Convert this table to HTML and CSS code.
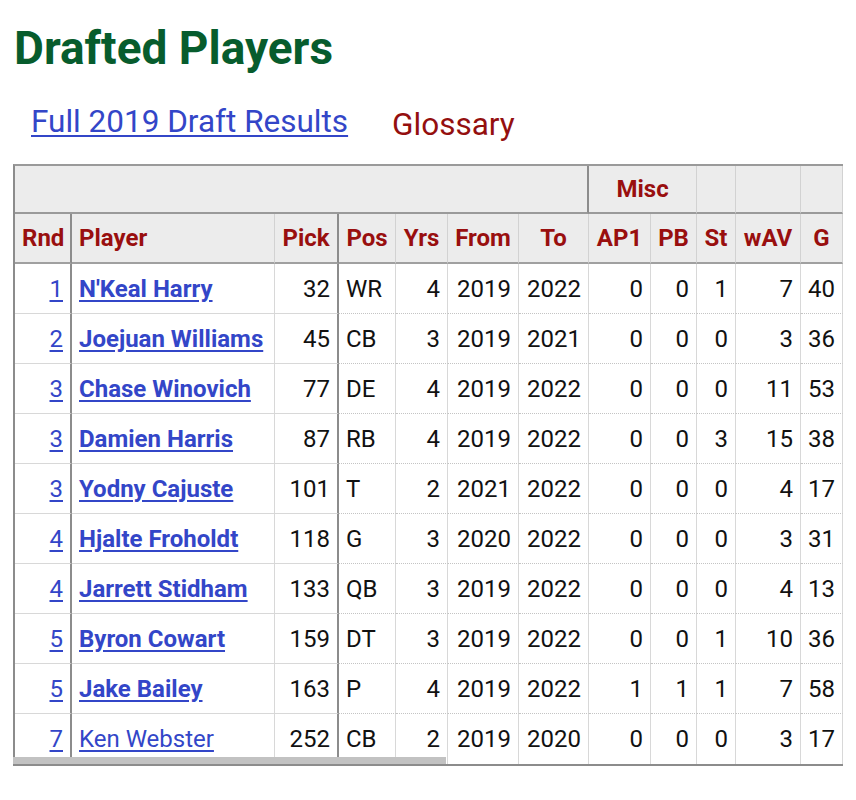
FILE: index.html
```html
<!DOCTYPE html>
<html>
<head>
<meta charset="utf-8">
<link rel="stylesheet" href="styles.css">
</head>
<body>
<h1 class="title">Drafted Players</h1>
<div class="links">
  <a class="full" href="#">Full 2019 Draft Results</a>
  <span class="gloss">Glossary</span>
</div>
<div class="table-wrap">
  <table class="stats">
    <colgroup>
      <col class="c-rnd"><col class="c-player"><col class="c-pick"><col class="c-pos"><col class="c-yrs"><col class="c-from"><col class="c-to"><col class="c-ap1"><col class="c-pb"><col class="c-st"><col class="c-wav"><col class="c-g">
    </colgroup>
    <thead>
      <tr class="over">
        <th colspan="7" class="grp"></th>
        <th colspan="2" class="grp-start">Misc</th>
        <th></th><th></th><th></th>
      </tr>
      <tr class="cols">
        <th>Rnd</th><th class="left">Player</th><th>Pick</th><th>Pos</th><th>Yrs</th><th>From</th><th>To</th><th>AP1</th><th>PB</th><th>St</th><th>wAV</th><th>G</th>
      </tr>
    </thead>
    <tbody>
      <tr><td><a href="#">1</a></td><td class="left"><a class="pl" href="#">N'Keal Harry</a></td><td>32</td><td class="left">WR</td><td>4</td><td>2019</td><td>2022</td><td>0</td><td>0</td><td>1</td><td>7</td><td>40</td></tr>
      <tr><td><a href="#">2</a></td><td class="left"><a class="pl" href="#">Joejuan Williams</a></td><td>45</td><td class="left">CB</td><td>3</td><td>2019</td><td>2021</td><td>0</td><td>0</td><td>0</td><td>3</td><td>36</td></tr>
      <tr><td><a href="#">3</a></td><td class="left"><a class="pl" href="#">Chase Winovich</a></td><td>77</td><td class="left">DE</td><td>4</td><td>2019</td><td>2022</td><td>0</td><td>0</td><td>0</td><td>11</td><td>53</td></tr>
      <tr><td><a href="#">3</a></td><td class="left"><a class="pl" href="#">Damien Harris</a></td><td>87</td><td class="left">RB</td><td>4</td><td>2019</td><td>2022</td><td>0</td><td>0</td><td>3</td><td>15</td><td>38</td></tr>
      <tr><td><a href="#">3</a></td><td class="left"><a class="pl" href="#">Yodny Cajuste</a></td><td>101</td><td class="left">T</td><td>2</td><td>2021</td><td>2022</td><td>0</td><td>0</td><td>0</td><td>4</td><td>17</td></tr>
      <tr><td><a href="#">4</a></td><td class="left"><a class="pl" href="#">Hjalte Froholdt</a></td><td>118</td><td class="left">G</td><td>3</td><td>2020</td><td>2022</td><td>0</td><td>0</td><td>0</td><td>3</td><td>31</td></tr>
      <tr><td><a href="#">4</a></td><td class="left"><a class="pl" href="#">Jarrett Stidham</a></td><td>133</td><td class="left">QB</td><td>3</td><td>2019</td><td>2022</td><td>0</td><td>0</td><td>0</td><td>4</td><td>13</td></tr>
      <tr><td><a href="#">5</a></td><td class="left"><a class="pl" href="#">Byron Cowart</a></td><td>159</td><td class="left">DT</td><td>3</td><td>2019</td><td>2022</td><td>0</td><td>0</td><td>1</td><td>10</td><td>36</td></tr>
      <tr><td><a href="#">5</a></td><td class="left"><a class="pl" href="#">Jake Bailey</a></td><td>163</td><td class="left">P</td><td>4</td><td>2019</td><td>2022</td><td>1</td><td>1</td><td>1</td><td>7</td><td>58</td></tr>
      <tr><td><a href="#">7</a></td><td class="left"><a href="#">Ken Webster</a></td><td>252</td><td class="left">CB</td><td>2</td><td>2019</td><td>2020</td><td>0</td><td>0</td><td>0</td><td>3</td><td>17</td></tr>
    </tbody>
  </table>
  <div class="scroll-thumb"></div>
</div>
</body>
</html>
```
FILE: styles.css
```css
html, body {
  margin: 0;
  padding: 0;
  background: #fff;
}
body {
  font-family: Roboto, "Liberation Sans", sans-serif;
  color: #111;
}
.title {
  margin: 22px 0 0 14px;
  font-size: 46px;
  line-height: 52px;
  font-weight: 700;
  color: #075c2d;
}
.links {
  margin: 30px 0 0 31px;
  height: 36px;
  font-size: 31.5px;
  line-height: 36px;
  display: flex;
  gap: 44px;
}
.links .full {
  color: #3346c8;
  text-decoration: underline;
  text-underline-offset: 3px;
  text-decoration-thickness: 2px;
}
.links .gloss {
  color: #940f0f;
  position: relative;
  top: 3px;
}
.table-wrap {
  position: relative;
  margin: 24px 0 0 13px;
  width: 830px;
  overflow: hidden;
}
.stats {
  border-collapse: separate;
  border-spacing: 0;
  table-layout: fixed;
  width: 830px;
  border-top: 2px solid #9a9a9a;
  border-left: 2px solid #8c8c8c;
  border-bottom: 2px solid #8c8c8c;
  font-size: 24px;
}
.c-rnd { width: 57px; }
.c-player { width: 203px; }
.c-pick { width: 64px; }
.c-pos { width: 57px; }
.c-yrs { width: 52px; }
.c-from { width: 71px; }
.c-to { width: 70px; }
.c-ap1 { width: 62px; }
.c-pb { width: 46px; }
.c-st { width: 39px; }
.c-wav { width: 65px; }
.c-g { width: 42px; }

.stats th, .stats td {
  box-sizing: border-box;
  padding: 0 7px;
  white-space: nowrap;
  overflow: hidden;
}
.stats th {
  background: #ececec;
  color: #990f0f;
  font-weight: 700;
  text-align: center;
  height: 50px;
  border-right: 1px solid #d2d2d2;
}
.stats .over th {
  height: 48px;
  border-bottom: 2px solid #9a9a9a;
}
.stats .over th.grp {
  border-right: 2px solid #8c8c8c;
}
.stats .cols th {
  border-bottom: 2px solid #a0a0a0;
}
.stats th.left, .stats td.left {
  text-align: left;
}
.stats td {
  height: 50px;
  text-align: right;
  border-right: 1px solid #d8d8d8;
  border-bottom: 1px dotted #c4c4c4;
  color: #111;
}
.stats tbody td:nth-child(-n+3) {
  border-bottom: 1px solid #d8d8d8;
}
.stats .cols th:nth-child(1),
.stats .cols th:nth-child(3),
.stats tbody td:nth-child(1),
.stats tbody td:nth-child(3) {
  border-right: 2px solid #8c8c8c;
}
.stats tbody tr:last-child td {
  border-bottom: none;
}
.stats a {
  color: #3346c8;
  text-decoration: underline;
  text-underline-offset: 3px;
}
.stats a.pl {
  font-weight: 700;
}
.scroll-thumb {
  position: absolute;
  left: 0;
  bottom: 2px;
  width: 433px;
  height: 7px;
  background: #c2c2c2;
}
```
